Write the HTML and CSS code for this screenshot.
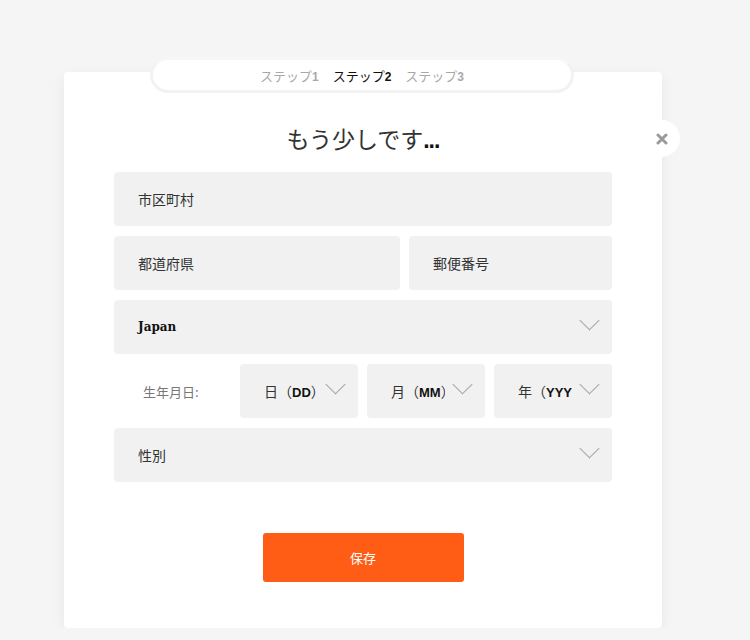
FILE: index.html
```html
<!DOCTYPE html>
<html lang="ja">
<head>
    <meta charset="UTF-8">
    <meta name="viewport" content="width=device-width, initial-scale=1.0">
    <title>もう少しです</title>
    <link rel="stylesheet" href="styles.css">
</head>
<body>

    <div class="card">
        <!-- steps -->
        <div class="steps">
            <span class="step">ステップ<b>1</b></span>
            <span class="step active">ステップ<b>2</b></span>
            <span class="step">ステップ<b>3</b></span>
        </div>

        <a class="close" href="#">
            <svg width="12" height="12" viewBox="0 0 12 12">
                <path d="M2 2 L10 10 M10 2 L2 10" stroke="#9a9a9a" stroke-width="3" stroke-linecap="round"/>
            </svg>
        </a>

        <h1>もう少しです<b>...</b></h1>

        <div class="form">
            <div class="field">市区町村</div>

            <div class="row two">
                <div class="field">都道府県</div>
                <div class="field">郵便番号</div>
            </div>

            <div class="field select"><b class="country">Japan</b><span class="chev"></span></div>

            <div class="row birth">
                <div class="label">生年月日:</div>
                <div class="field select small"><span class="val">日（<b>DD</b>）</span><span class="chev"></span></div>
                <div class="field select small"><span class="val">月（<b>MM</b>）</span><span class="chev"></span></div>
                <div class="field select small"><span class="val">年（<b>YYYY</b>）</span><span class="chev"></span></div>
            </div>

            <div class="field select">性別<span class="chev"></span></div>
        </div>

        <div class="actions">
            <button class="save">保存</button>
        </div>
    </div>

</body>
</html>
```

FILE: styles.css
```css
body {
    font-family: "Noto Sans CJK JP", "Noto Sans", sans-serif;
    background-color: #f5f5f5;
    margin: 0;
    padding: 72px 0 0 64px;
    color: #222;
}
.card {
    position: relative;
    width: 598px;
    box-sizing: border-box;
    background-color: #fff;
    border-radius: 4px;
    box-shadow: 0 4px 14px rgba(0, 0, 0, 0.06);
    padding: 51px 50px 46px;
}
.steps {
    position: absolute;
    top: -15px;
    left: 86px;
    width: 424px;
    height: 36px;
    box-sizing: border-box;
    background-color: #fff;
    border-radius: 18px;
    border: 3px solid #f2f2f2;
    border-top-color: #f7f7f7;
    display: flex;
    justify-content: center;
    align-items: center;
    gap: 14px;
    font-size: 13px;
}
.step {
    color: #a8a8a8;
}
.step b {
    font-family: "Liberation Sans", sans-serif;
    font-size: 12px;
}
.step.active {
    color: #111;
}
.close {
    position: absolute;
    top: 48px;
    right: -18px;
    width: 37px;
    height: 37px;
    border-radius: 50%;
    background-color: #fff;
    display: flex;
    align-items: center;
    justify-content: center;
}
h1 {
    margin: 0 0 17px;
    text-align: center;
    font-size: 23px;
    font-weight: normal;
    line-height: 30px;
    color: #333;
}
h1 b {
    font-family: "Liberation Sans", sans-serif;
    color: #111;
    letter-spacing: -1px;
}
.form {
    display: flex;
    flex-direction: column;
    gap: 10px;
}
.row {
    display: flex;
    gap: 9px;
}
.field {
    position: relative;
    height: 54px;
    box-sizing: border-box;
    background-color: #f1f1f1;
    border-radius: 4px;
    padding: 0 24px;
    display: flex;
    align-items: center;
    font-size: 14px;
    color: #333;
}
.two .field:first-child {
    width: 286px;
}
.two .field:last-child {
    flex: 1;
}
.country {
    font-family: "DejaVu Serif", serif;
    font-size: 12px;
    color: #111;
}
.chev {
    position: absolute;
    right: 12px;
    top: 20px;
    width: 12px;
    height: 12px;
    border-right: 1px solid #aaa;
    border-bottom: 1px solid #aaa;
    transform: translateY(-6px) rotate(45deg) scale(1.1);
    transform-origin: center;
}
.select .chev {
    right: 16px;
}
.birth .label {
    width: 117px;
    flex-shrink: 0;
    box-sizing: border-box;
    padding-left: 29px;
    display: flex;
    align-items: center;
    font-size: 13px;
    color: #777;
}
.field.small {
    width: 118px;
    flex-shrink: 0;
    padding-right: 40px;
    overflow: hidden;
    white-space: nowrap;
}
.small .val {
    overflow: hidden;
}
.small b {
    font-family: "Liberation Sans", sans-serif;
    font-size: 13px;
    color: #111;
}
.actions {
    display: flex;
    justify-content: center;
    margin-top: 51px;
}
.save {
    width: 201px;
    height: 49px;
    border: none;
    border-radius: 3px;
    background-color: #ff5c16;
    color: #fff;
    font-family: inherit;
    font-size: 13px;
}
```
